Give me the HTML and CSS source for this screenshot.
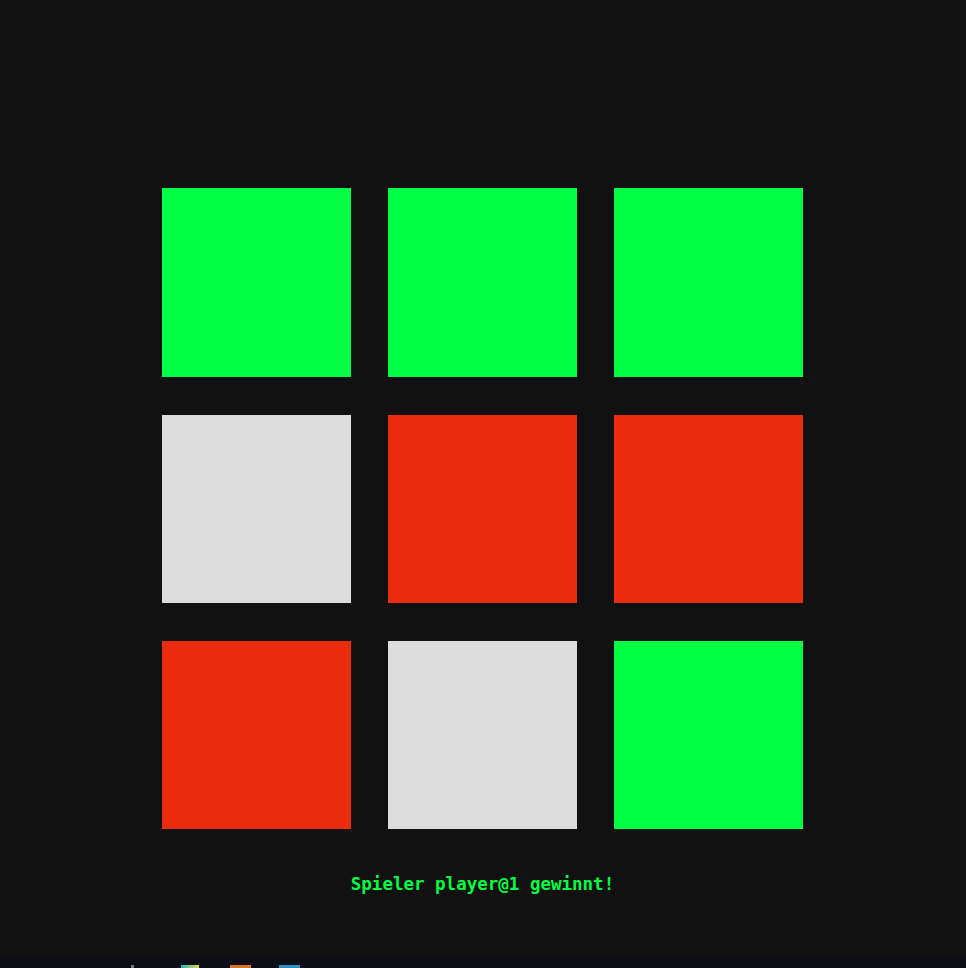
FILE: index.html
```html
<!DOCTYPE html>
<html lang="de">
<head>
<meta charset="utf-8">
<title>Tic Tac Toe</title>
<link rel="stylesheet" href="styles.css">
</head>
<body>
<main class="game">
  <div class="board">
    <div class="cell win"></div>
    <div class="cell win"></div>
    <div class="cell win"></div>
    <div class="cell empty"></div>
    <div class="cell red"></div>
    <div class="cell red"></div>
    <div class="cell red"></div>
    <div class="cell empty"></div>
    <div class="cell win"></div>
  </div>
  <p class="status">Spieler player@1 gewinnt!</p>
</main>
<div class="taskbar">
  <span class="tb tb-arrow"></span>
  <span class="tb tb-folder"></span>
  <span class="tb tb-orange"></span>
  <span class="tb tb-blue"></span>
</div>
</body>
</html>
```
FILE: styles.css
```css
html, body {
  margin: 0;
  padding: 0;
  background: #111111;
  height: 100%;
  overflow: hidden;
}
body {
  display: flex;
  flex-direction: column;
}
.game {
  flex: 1;
  display: flex;
  flex-direction: column;
  align-items: center;
  padding-top: 188px;
  padding-right: 1px;
}
.board {
  display: grid;
  grid-template-columns: repeat(3, 189px);
  grid-template-rows: 189px 188px 188px;
  column-gap: 37px;
  row-gap: 38px;
}
.cell { width: 189px; }
.win { background: #00ff44; }
.red { background: #e82c0c; }
.empty { background: #dddddd; }
.status {
  margin: 41px 0 0;
  font-family: "DejaVu Sans Mono", "Liberation Mono", monospace;
  font-weight: bold;
  font-size: 17.5px;
  line-height: 28px;
  color: #00ff44;
}
.taskbar {
  height: 10px;
  background: #0b0e14;
  position: relative;
}
.tb {
  position: absolute;
  bottom: 0;
  height: 3px;
}
.tb-arrow { left: 131px; width: 3px; background: #777; }
.tb-folder { left: 181px; width: 18px; background: linear-gradient(90deg, #1bb7c4, #e6d24a); }
.tb-orange { left: 230px; width: 21px; background: #d7731c; }
.tb-blue { left: 279px; width: 21px; background: #2a8fc7; }
```
